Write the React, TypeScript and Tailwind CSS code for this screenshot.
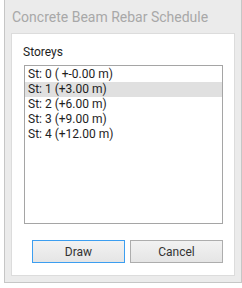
const storeys = [
  "St: 0 ( +-0.00 m)",
  "St: 1 (+3.00 m)",
  "St: 2 (+6.00 m)",
  "St: 3 (+9.00 m)",
  "St: 4 (+12.00 m)",
];

export default function App() {
  const selected = 1;
  return (
    <div
      className="h-[288px] w-[242px] bg-white pl-[4px]"
      style={{ fontFamily: 'Roboto, "Noto Sans", sans-serif' }}
    >
      <div className="flex h-[283px] w-[238px] flex-col border-x border-b border-[#c6c6c6] bg-[#ebebeb]">
        <div className="flex h-[33px] items-center pl-[7px] pt-[2px] text-[14px] text-[#a8a8a8]">
          Concrete Beam Rebar Schedule
        </div>
        <div className="ml-[6px] flex h-[243px] w-[224px] flex-col border border-[#dcdcdc] bg-white">
          <div className="mt-[11px] pl-[11px] text-[12px] leading-[15px] text-[#1e1e1e]">
            Storeys
          </div>
          <div className="ml-[12px] mt-[5px] h-[159px] w-[199px] border border-[#a5a5a5] bg-white pt-[1px]">
            {storeys.map((s, i) => (
              <div
                key={s}
                className={
                  i === selected
                    ? "h-[15px] bg-[#e0e0e0] pl-[3px] text-[12px] leading-[15px] text-[#1e1e1e]"
                    : "h-[15px] pl-[3px] text-[12px] leading-[15px] text-[#1e1e1e]"
                }
              >
                {s}
              </div>
            ))}
          </div>
          <div className="ml-[20px] mt-[16px] flex gap-[5px]">
            <button
              type="button"
              className="h-[23px] w-[93px] border border-[#3c9ef0] bg-gradient-to-b from-[#f2f2f2] to-[#e5e5e5] text-[12px] text-[#333]"
            >
              Draw
            </button>
            <button
              type="button"
              className="h-[23px] w-[93px] border border-[#adadad] bg-gradient-to-b from-[#f2f2f2] to-[#e5e5e5] text-[12px] text-[#333]"
            >
              Cancel
            </button>
          </div>
        </div>
      </div>
    </div>
  );
}
